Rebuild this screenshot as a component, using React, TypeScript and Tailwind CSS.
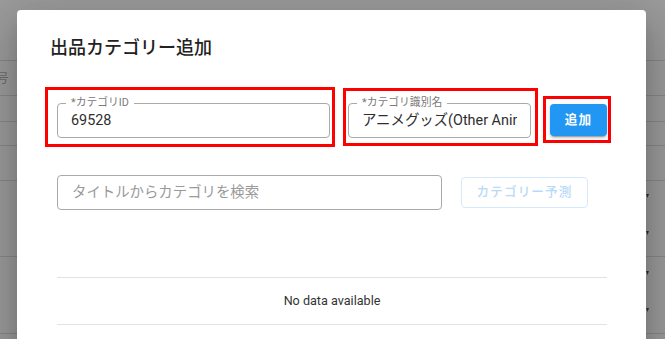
import React from "react";

function Mark() {
  return (
    <svg width="3" height="4" viewBox="0 0 3 4" className="block">
      <path d="M0 0 L3 0 L1.5 4 Z" fill="#2a3550" />
    </svg>
  );
}

function Outlined({
  label,
  value,
  width,
}: {
  label: string;
  value: string;
  width: string;
}) {
  return (
    <div
      className={`relative h-[35px] ${width} rounded-[4px] border border-[#a9a9a9] flex items-center px-[13px] bg-white`}
    >
      <span className="absolute left-[8px] top-[-8px] bg-white px-[5px] text-[10.8px] leading-[13px] text-[#7a7a7a] whitespace-nowrap">
        {label}
      </span>
      <div className="overflow-hidden whitespace-nowrap text-[14.4px] leading-[20px] text-[#2e2e2e] w-full">
        {value}
      </div>
    </div>
  );
}

export default function App() {
  return (
    <div className="relative w-[665px] h-[339px] overflow-hidden bg-[#9b9b9b] font-['Roboto','Noto_Sans_CJK_JP',sans-serif]">
      {/* background page (under overlay) */}
      <div className="flex flex-col w-full">
        <div className="h-[61px] border-b border-[#878787]" />
        <div className="h-[35px] border-b border-[#878787] flex items-center">
          <span className="-ml-[4px] text-[12.6px] text-[#6b6b6b] leading-none">号</span>
        </div>
        <div className="h-[26px] border-b border-[#878787]" />
        <div className="h-[24px] border-b border-[#878787]" />
        <div className="h-[35px] border-b border-[#878787]" />
        <div className="h-[76px] border-b border-[#878787] flex justify-end pr-[16px]">
          <div className="flex flex-col pt-[13px] gap-[33px]">
            <Mark />
            <Mark />
          </div>
        </div>
        <div className="h-[77px] border-b border-[#878787] flex justify-end pr-[16px]">
          <div className="flex flex-col pt-[14px] gap-[33px]">
            <Mark />
            <Mark />
          </div>
        </div>
        <div className="h-[40px]" />
      </div>

      {/* dialog */}
      <div className="absolute left-[17px] top-[10px] w-[629px] h-[400px] bg-white rounded-[4px] shadow-[0_11px_15px_-7px_rgba(0,0,0,0.2),0_24px_38px_3px_rgba(0,0,0,0.14),0_9px_46px_8px_rgba(0,0,0,0.12)]">
        <div className="pl-[33px] pt-[24px] text-[18px] leading-[28px] font-medium text-[#222]">
          出品カテゴリー追加
        </div>

        <div className="mt-[25px] ml-[28px] flex items-start">
          <div className="w-[290px] h-[60px] border-[3px] border-[#ff0000] pl-[9px] pt-[13px]">
            <Outlined label="*カテゴリID" value="69528" width="w-[273px]" />
          </div>
          <div className="ml-[8px] mt-[1px] w-[195px] h-[58px] border-[3px] border-[#ff0000] pl-[2px] pt-[12px]">
            <Outlined
              label="*カテゴリ識別名"
              value="アニメグッズ(Other Anime Collectibles)"
              width="w-[183px]"
            />
          </div>
          <div className="ml-[5px] mt-[9px] w-[68px] h-[47px] border-[3px] border-[#ff0000] pl-[4px] pt-[5px]">
            <button className="w-[57px] h-[32px] rounded-[4px] bg-[#2196f3] text-white text-[12.6px] font-bold tracking-[1.1px] shadow-[0_3px_1px_-2px_rgba(0,0,0,0.2),0_2px_2px_0_rgba(0,0,0,0.14),0_1px_5px_0_rgba(0,0,0,0.12)] flex items-center justify-center">
              追加
            </button>
          </div>
        </div>

        <div className="mt-[28px] ml-[40px] flex items-start">
          <div className="w-[385px] h-[35px] rounded-[4px] border border-[#a9a9a9] flex items-center px-[14px]">
            <span className="text-[14.4px] leading-[20px] text-[#9a9a9a]">
              タイトルからカテゴリを検索
            </span>
          </div>
          <button className="ml-[19px] mt-[2px] w-[127px] h-[31px] rounded-[4px] border border-[#d4e9fc] text-[#b7daf9] text-[12.6px] font-medium tracking-[1.1px] flex items-center justify-center">
            カテゴリー予測
          </button>
        </div>

        <div className="mt-[67px] ml-[40px] w-[550px] h-[48px] border-t border-b border-[#e3e3e3] flex items-center justify-center text-[12.6px] leading-[16px] text-[#333]">
          No data available
        </div>
      </div>
    </div>
  );
}
